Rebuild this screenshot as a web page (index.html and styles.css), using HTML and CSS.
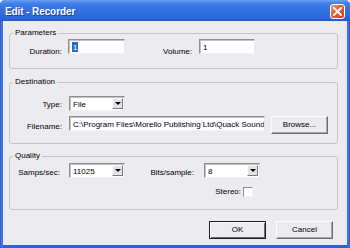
FILE: index.html
```html
<!DOCTYPE html>
<html>
<head>
<meta charset="utf-8">
<title>Edit - Recorder</title>
<link rel="stylesheet" href="styles.css">
</head>
<body>
<div class="window">
  <div class="titlebar">
    <span class="title">Edit - Recorder</span>
    <span class="close">
      <svg width="9" height="9" viewBox="0 0 9 9"><path d="M1 1 L8 8 M8 1 L1 8" stroke="#fff" stroke-width="1.8" stroke-linecap="square"/></svg>
    </span>
  </div>
  <div class="client">
    <fieldset class="group g-params">
      <legend>Parameters</legend>
      <div class="row">
        <span class="lbl l-dur">Duration:</span>
        <span class="edit e-dur"><span class="hl">1</span></span>
        <span class="lbl l-vol">Volume:</span>
        <span class="edit e-vol">1</span>
      </div>
    </fieldset>
    <fieldset class="group g-dest">
      <legend>Destination</legend>
      <div class="row r-type">
        <span class="lbl l-type">Type:</span>
        <span class="combo c-type"><span class="combo-text">File</span><span class="combo-btn"><span class="arrow"></span></span></span>
      </div>
      <div class="row r-file">
        <span class="lbl l-file">Filename:</span>
        <span class="edit e-file">C:\Program Files\Morello Publishing Ltd\Quack Sound</span>
        <span class="btn b-browse">Browse...</span>
      </div>
    </fieldset>
    <fieldset class="group g-qual">
      <legend>Quality</legend>
      <div class="row r-samps">
        <span class="lbl l-samps">Samps/sec:</span>
        <span class="combo c-samps"><span class="combo-text">11025</span><span class="combo-btn"><span class="arrow"></span></span></span>
        <span class="lbl l-bits">Bits/sample:</span>
        <span class="combo c-bits"><span class="combo-text">8</span><span class="combo-btn"><span class="arrow"></span></span></span>
      </div>
      <div class="row r-stereo">
        <span class="lbl l-stereo">Stereo:</span>
        <span class="check"></span>
      </div>
    </fieldset>
    <div class="buttons">
      <span class="btn default">OK</span>
      <span class="btn">Cancel</span>
    </div>
  </div>
</div>
</body>
</html>
```
FILE: styles.css
```css
* { box-sizing: border-box; }
html, body { margin: 0; padding: 0; background: #fff; }
body {
  width: 350px; height: 248px; overflow: hidden;
  font-family: "Liberation Sans", Arial, sans-serif;
  font-size: 8px; color: #000;
}
.window {
  width: 350px; height: 248px;
  display: flex; flex-direction: column;
  background: linear-gradient(90deg, #2658d0 0, #4a7fe2 2px, #2d62d6 3px, #2d62d6 347px, #4a7fe2 348px, #2658d0 350px);
  border-radius: 5px 5px 0 0;
}
.titlebar {
  height: 21px; flex: none;
  display: flex; align-items: center; justify-content: space-between;
  padding: 0 5px 0 5px;
  background: linear-gradient(#6ea2f2 0, #4282ea 3px, #3574e2 8px, #2f6cdd 15px, #2b64d5 19px, #2152c2 21px);
  border-radius: 5px 5px 0 0;
}
.title {
  color: #fff; font-weight: bold; font-size: 10px;
  letter-spacing: -0.1px;
  text-shadow: 1px 1px 0 #1c3f9e;
  margin-top: 1px;
}
.close {
  width: 15px; height: 15px; margin-top: 1px;
  display: flex; align-items: center; justify-content: center;
  border: 1px solid #fff; border-radius: 3px;
  background: linear-gradient(135deg, #f0a080 0, #e2653f 40%, #c9421f 100%);
}
.close svg { display: block; }
.client {
  flex: 1;
  margin: 0 3px 3px 3px;
  background: #ecebef;
  display: flex; flex-direction: column;
  padding: 6px 9px 0 6px;
}
.group {
  margin: 0; padding: 0; min-width: 0;
  border: 1px solid #c4c3c8;
  border-radius: 3px;
}
.group legend {
  margin-left: 3px; padding: 0 2px;
  line-height: 12px; height: 12px;
}
.row { display: flex; align-items: flex-start; }
.lbl { flex: none; text-align: right; line-height: 10px; white-space: nowrap; }

.edit, .combo {
  flex: none;
  height: 15px;
  background: #fff;
  border: 1px solid;
  border-color: #8d8c91 #e6e5ea #f4f4f6 #8d8c91;
  box-shadow: inset 1px 1px 0 #c2c1c6;
  line-height: 9px;
  white-space: nowrap; overflow: hidden;
}
.edit { padding: 3px 0 0 3px; }

/* Parameters */
.g-params { padding-bottom: 11px; }
.l-dur { width: 52px; margin-top: 8px; }
.e-dur { width: 57px; margin-left: 6px; padding-left: 3px; }
.hl { background: #316ac5; color: #fff; padding: 1px 1px 0 1px; }
.l-vol { width: 67px; margin-top: 8px; }
.e-vol { width: 56px; margin-left: 7px; }

/* Destination */
.g-dest { margin-top: 7px; padding-bottom: 9px; }
.r-type { margin-top: 8px; }
.l-type { width: 52px; margin-top: 4px; }
.combo { display: flex; padding: 0; }
.combo-text { flex: 1; padding: 3px 0 0 3px; }
.combo-btn {
  flex: none; width: 11px; margin: 1px 1px 1px 0;
  background: #e4e3e8;
  border: 1px solid; border-color: #fbfbfc #7e7d82 #7e7d82 #fbfbfc;
  display: flex; align-items: center; justify-content: center;
}
.arrow {
  width: 0; height: 0;
  border-left: 3px solid transparent; border-right: 3px solid transparent;
  border-top: 3px solid #000;
}
.c-type { width: 56px; margin-left: 7px; }
.r-file { margin-top: 5px; }
.l-file { width: 52px; margin-top: 6px; }
.e-file { width: 196px; margin-left: 7px; }
.btn {
  flex: none;
  display: flex; align-items: center; justify-content: center;
  width: 57px; height: 18px;
  background: #ecebef;
  border: 1px solid; border-color: #fdfdfe #6d6c71 #6d6c71 #fdfdfe;
  box-shadow: inset -1px -1px 0 #a7a6ab;
  padding-bottom: 1px;
}
.b-browse { margin-left: 6px; }

/* Quality */
.g-qual { margin-top: 6px; padding-bottom: 12px; }
.r-samps { margin-top: 1px; }
.l-samps { width: 50px; margin-top: 5px; }
.c-samps { width: 56px; margin-left: 9px; }
.l-bits { width: 69px; margin-top: 5px; }
.c-bits { width: 56px; margin-left: 10px; }
.r-stereo { margin-top: 9px; align-items: flex-end; }
.l-stereo { width: 231px; }
.check {
  flex: none; width: 10px; height: 10px; margin-left: 2px;
  background: #fff;
  border: 1px solid; border-color: #8d8c91 #f4f4f6 #f4f4f6 #8d8c91;
}

.buttons {
  display: flex; justify-content: flex-end; gap: 10px;
  margin-top: 11px; padding-right: 5px;
}
.btn.default {
  border: 1px solid #1d1d1d;
  box-shadow: inset 1px 1px 0 #fdfdfe, inset -1px -1px 0 #6d6c71;
}
```
